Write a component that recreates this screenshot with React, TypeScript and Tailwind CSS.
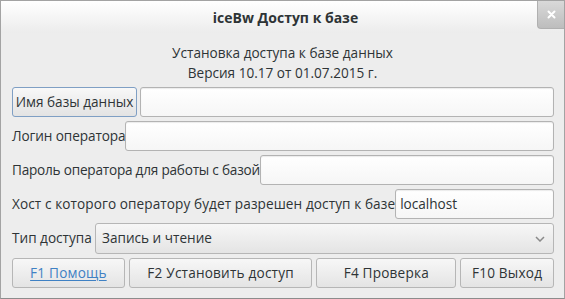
import React from "react";

const font = { fontFamily: '"Open Sans", "DejaVu Sans", sans-serif' };

function Field({ value = "" }: { value?: string }) {
  return (
    <div className="flex-1 min-w-0 h-[30px] rounded-[3px] border border-[#b3b3b3] bg-gradient-to-b from-[#ffffff] to-[#f6f6f6] shadow-[inset_0_1px_1px_rgba(0,0,0,0.08)] flex items-center px-[4px] text-[13.6px] text-[#2e3436]">
      {value}
    </div>
  );
}

function Btn({ w, children, link = false }: { w: string; children: React.ReactNode; link?: boolean }) {
  return (
    <div
      className={`${w} h-[30px] rounded-[3px] border border-[#b6b6b6] bg-gradient-to-b from-[#f7f7f7] to-[#e4e4e4] flex items-center justify-center text-[13.6px] tracking-[0.2px] ${link ? "text-[#3f81c4] underline underline-offset-2" : "text-[#2e3436]"}`}
    >
      {children}
    </div>
  );
}

export default function App() {
  return (
    <div style={font} className="w-[565px] h-[299px] bg-[#ededed] border border-[#a3a3a3] border-b-[#8c8c8c] flex flex-col text-[#2e3436] text-[13.6px]">
      <div className="relative h-[32px] shrink-0 bg-gradient-to-b from-[#ffffff] to-[#ececec] flex items-center justify-center">
        <span className="text-[14px] font-bold text-[#2e3436] pt-[1px] pl-[6px]">iceBw Доступ к базе</span>
        <div className="absolute right-0 top-0 w-[27px] h-[28px] rounded-bl-[4px] bg-gradient-to-b from-[#d9d9d9] to-[#bdbdbd] border-l border-b border-[#b0b0b0] flex items-center justify-center">
          <svg width="9" height="9" viewBox="0 0 9 9">
            <path d="M1.5 1.5 L7.5 7.5 M7.5 1.5 L1.5 7.5" stroke="#ffffff" strokeWidth="2" strokeLinecap="round" />
          </svg>
        </div>
      </div>
      <div className="flex flex-col items-center mt-[10px] leading-[20px]">
        <div>Установка доступа к базе данных</div>
        <div>Версия 10.17 от 01.07.2015 г.</div>
      </div>
      <div className="flex flex-col gap-[4px] mt-[4px] pl-[11px] pr-[10px]">
        <div className="flex items-center gap-[3px]">
          <div className="w-[125px] shrink-0 h-[30px] rounded-[3px] border border-[#7f9fc4] bg-gradient-to-b from-[#f8f8f8] to-[#e3e3e3] flex items-center justify-center whitespace-nowrap">
            Имя базы данных
          </div>
          <Field />
        </div>
        <div className="flex items-center">
          <div className="shrink-0 whitespace-nowrap tracking-[-0.1px]">Логин оператора</div>
          <Field />
        </div>
        <div className="flex items-center">
          <div className="shrink-0 whitespace-nowrap tracking-[-0.22px]">Пароль оператора для работы с базой</div>
          <Field />
        </div>
        <div className="flex items-center">
          <div className="shrink-0 whitespace-nowrap tracking-[0.09px]">Хост с которого оператору будет разрешен доступ к базе</div>
          <Field value="localhost" />
        </div>
        <div className="flex items-center">
          <div className="shrink-0 min-w-[83px] whitespace-nowrap">Тип доступа</div>
          <div className="flex-1 h-[31px] rounded-[3px] border border-[#b6b6b6] bg-gradient-to-b from-[#f7f7f7] to-[#e4e4e4] flex items-center justify-between pl-[6px] pr-[8px]">
            <span>Запись и чтение</span>
            <svg width="10" height="6" viewBox="0 0 10 6">
              <path d="M1 1 L5 5 L9 1" stroke="#8a8a8a" strokeWidth="1.5" fill="none" />
            </svg>
          </div>
        </div>
        <div className="flex items-center gap-[4px]">
          <Btn w="w-[113px]" link>F1 Помощь</Btn>
          <Btn w="w-[184px]">F2 Установить доступ</Btn>
          <Btn w="w-[140px]">F4 Проверка</Btn>
          <Btn w="w-[94px]">F10 Выход</Btn>
        </div>
      </div>
    </div>
  );
}
